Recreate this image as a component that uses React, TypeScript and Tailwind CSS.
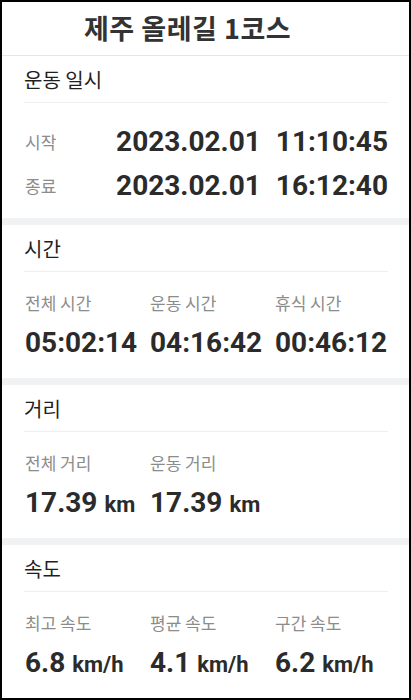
import React from "react";

const num = { fontFamily: "Roboto, 'Noto Sans CJK KR', sans-serif" };
const kr = { fontFamily: "'Noto Sans CJK KR', 'Noto Sans', sans-serif" };

type Stat = { label: string; value: string; unit?: string };

const sections: { title: string; stats: Stat[] }[] = [
  {
    title: "시간",
    stats: [
      { label: "전체 시간", value: "05:02:14" },
      { label: "운동 시간", value: "04:16:42" },
      { label: "휴식 시간", value: "00:46:12" },
    ],
  },
  {
    title: "거리",
    stats: [
      { label: "전체 거리", value: "17.39", unit: "km" },
      { label: "운동 거리", value: "17.39", unit: "km" },
    ],
  },
  {
    title: "속도",
    stats: [
      { label: "최고 속도", value: "6.8", unit: "km/h" },
      { label: "평균 속도", value: "4.1", unit: "km/h" },
      { label: "구간 속도", value: "6.2", unit: "km/h" },
    ],
  },
];

function SectionHeader({ title }: { title: string }) {
  return (
    <div className="pt-[12px]">
      <div className="h-[24px] flex items-center text-[20px] font-normal text-[#1f1f1f]" style={kr}>
        {title}
      </div>
      <div className="mt-[10px] h-px bg-[#eeeeee]" />
    </div>
  );
}

function Band() {
  return <div className="h-[7px] bg-[#f1f2f4]" />;
}

export default function App() {
  return (
    <div className="w-[411px] h-[700px] border-2 border-black bg-white overflow-hidden">
      {/* Title bar */}
      <div className="h-[54px] flex items-center pl-[82px] border-b border-[#e6e6e6]">
        <h1 className="m-0 text-[27px] font-bold text-[#333] tracking-[0.5px]" style={kr}>
          제주 올레길 1코스
        </h1>
      </div>

      {/* 운동 일시 */}
      <div className="pl-[22px] pr-[21px] pb-[10px]">
        <SectionHeader title="운동 일시" />
        <div className="pt-[17px]">
          {[
            ["시작", "2023.02.01", "11:10:45"],
            ["종료", "2023.02.01", "16:12:40"],
          ].map(([label, date, time]) => (
            <div key={label} className="h-[44px] flex items-center justify-between">
              <span className="text-[17px] text-[#8c8c8c] pl-[1px]" style={kr}>
                {label}
              </span>
              <span className="text-[28px] font-bold text-[#2b2b2b] flex gap-[15px]" style={num}>
                <span>{date}</span>
                <span>{time}</span>
              </span>
            </div>
          ))}
        </div>
      </div>

      {sections.map((s) => (
        <React.Fragment key={s.title}>
          <Band />
          <div className="pl-[22px] pr-[21px] h-[153px]">
            <SectionHeader title={s.title} />
            <div className="flex pt-[21px] pl-[1px]">
              {s.stats.map((st) => (
                <div key={st.label} className="w-[125px] shrink-0 flex flex-col">
                  <span className="h-[20px] flex items-center text-[17px] text-[#8c8c8c]" style={kr}>
                    {st.label}
                  </span>
                  <span className="mt-[9px] h-[32px] flex items-baseline text-[28px] font-bold text-[#2b2b2b]" style={num}>
                    {st.value}
                    {st.unit && <span className="ml-[7px] text-[22px]">{st.unit}</span>}
                  </span>
                </div>
              ))}
            </div>
          </div>
        </React.Fragment>
      ))}
    </div>
  );
}
